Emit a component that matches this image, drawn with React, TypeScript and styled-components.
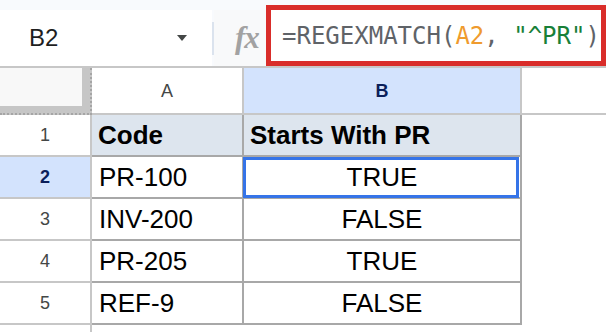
import React from 'react';
import styled, { createGlobalStyle, css } from 'styled-components';

const Global = createGlobalStyle`
  html, body { margin: 0; padding: 0; background: #fff; }
  body { width: 606px; height: 332px; overflow: hidden; font-family: "Liberation Sans", Arial, sans-serif; }
`;

const Page = styled.div`
  width: 606px;
  height: 332px;
  overflow: hidden;
  display: flex;
  flex-direction: column;
  background: #fff;
`;

const TopBar = styled.div`
  height: 66px;
  flex-shrink: 0;
  display: flex;
  align-items: flex-end;
  background: #f8fafd;
`;

const NameBox = styled.div`
  width: 212px;
  height: 56px;
  box-sizing: border-box;
  background: #fff;
  display: flex;
  align-items: center;
  justify-content: space-between;
  padding: 0 25px 0 29px;
  font-size: 24px;
  color: #1f1f1f;
`;

const Sep = styled.div`
  width: 2px;
  height: 33px;
  margin-bottom: 11px;
  background: #dbe3ee;
`;

const FxArea = styled.div`
  width: 52px;
  height: 56px;
  box-sizing: border-box;
  background: #f8f9fa;
  display: flex;
  align-items: center;
  padding-left: 21px;
  font-family: "Liberation Serif", serif;
  font-style: italic;
  font-weight: bold;
  font-size: 31px;
  color: #a2a2a2;
  letter-spacing: -1px;
`;

const FormulaBox = styled.div`
  flex: 1;
  height: 61px;
  box-sizing: border-box;
  border: 5px solid #d92d2a;
  background: #fff;
  display: flex;
  align-items: center;
  padding-left: 11px;
  font-family: "DejaVu Sans Mono", monospace;
  font-size: 24px;
  color: #5f6368;
  white-space: pre;
`;

const Tok = styled.span<{ $kind?: 'ref' | 'str' }>`
  color: ${(p) => (p.$kind === 'ref' ? '#ef9b2e' : p.$kind === 'str' ? '#188038' : '#5f6368')};
`;

const Grid = styled.div`
  flex: 1;
  display: grid;
  grid-template-columns: 92px 152px 278px 1fr;
  grid-template-rows: 47px repeat(5, 42px) 1fr;
  border-top: 2px solid #c7c7c7;
`;

const Corner = styled.div`
  box-sizing: border-box;
  background: #c6c6c6;
  border-right: 2px dotted #a5a5a5;
  border-bottom: 2px dotted #a5a5a5;
`;

const CornerInner = styled.div`
  width: 82px;
  height: 38px;
  background: #f8f8f8;
`;

const ColHeader = styled.div<{ $selected?: boolean; $last?: boolean }>`
  box-sizing: border-box;
  display: flex;
  align-items: center;
  justify-content: center;
  padding-top: 2px;
  font-size: 18px;
  border-bottom: 2px solid #c7c7c7;
  border-right: ${(p) => (p.$last ? 'none' : '2px solid #c7c7c7')};
  background: ${(p) => (p.$selected ? '#d3e3fd' : '#fff')};
  color: ${(p) => (p.$selected ? '#0b1f5a' : '#444746')};
  font-weight: ${(p) => (p.$selected ? 'bold' : 'normal')};
`;

const RowHeader = styled.div<{ $selected?: boolean; $open?: boolean }>`
  box-sizing: border-box;
  display: flex;
  align-items: center;
  justify-content: center;
  font-size: 18px;
  border-right: 2px solid #c7c7c7;
  border-bottom: ${(p) => (p.$open ? 'none' : '2px solid #c7c7c7')};
  background: ${(p) => (p.$selected ? '#d3e3fd' : '#fff')};
  color: ${(p) => (p.$selected ? '#0b1f5a' : '#444746')};
  font-weight: ${(p) => (p.$selected ? 'bold' : 'normal')};
`;

const Cell = styled.div<{ $head?: boolean; $center?: boolean; $active?: boolean }>`
  box-sizing: border-box;
  position: relative;
  display: flex;
  align-items: center;
  padding-left: ${(p) => (p.$center ? '0' : p.$head ? '6px' : '7px')};
  justify-content: ${(p) => (p.$center ? 'center' : 'flex-start')};
  font-size: 26px;
  color: #000;
  border-right: 2px solid #a8a8a8;
  border-bottom: 2px solid #a8a8a8;
  background: ${(p) => (p.$head ? '#dde5ee' : '#fff')};
  font-weight: ${(p) => (p.$head ? 'bold' : 'normal')};
  ${(p) =>
    p.$active &&
    css`
      &::after {
        content: '';
        position: absolute;
        top: 0;
        left: -1px;
        right: 1px;
        bottom: -1px;
        border: 3px solid #3574e8;
      }
    `}
`;

const Blank = styled.div``;

const rows = [
  { code: 'PR-100', res: 'TRUE' },
  { code: 'INV-200', res: 'FALSE' },
  { code: 'PR-205', res: 'TRUE' },
  { code: 'REF-9', res: 'FALSE' },
];

export default function App() {
  return (
    <Page>
      <Global />
      <TopBar>
        <NameBox>
          <span>B2</span>
          <svg width="10" height="6" viewBox="0 0 10 6">
            <polygon points="0,0 10,0 5,6" fill="#444746" />
          </svg>
        </NameBox>
        <Sep />
        <FxArea>fx</FxArea>
        <FormulaBox>
          <Tok>=REGEXMATCH(</Tok>
          <Tok $kind="ref">A2</Tok>
          <Tok>, </Tok>
          <Tok $kind="str">"^PR"</Tok>
          <Tok>)</Tok>
        </FormulaBox>
      </TopBar>
      <Grid>
        <Corner>
          <CornerInner />
        </Corner>
        <ColHeader>A</ColHeader>
        <ColHeader $selected>B</ColHeader>
        <ColHeader $last />

        <RowHeader>1</RowHeader>
        <Cell $head>Code</Cell>
        <Cell $head>Starts With PR</Cell>
        <Blank />

        {rows.map((r, i) => (
          <React.Fragment key={r.code}>
            <RowHeader $selected={i === 0}>{i + 2}</RowHeader>
            <Cell>{r.code}</Cell>
            <Cell $center $active={i === 0}>{r.res}</Cell>
            <Blank />
          </React.Fragment>
        ))}

        <RowHeader $open />
        <Blank />
        <Blank />
        <Blank />
      </Grid>
    </Page>
  );
}
